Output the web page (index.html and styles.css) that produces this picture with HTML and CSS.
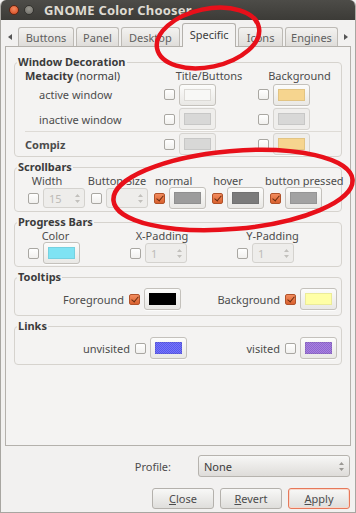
FILE: index.html
```html
<!DOCTYPE html>
<html lang="en">
<head>
    <meta charset="UTF-8">
    <meta name="viewport" content="width=device-width, initial-scale=1.0">
    <title>GNOME Color Chooser</title>
    <link rel="stylesheet" href="styles.css">
</head>
<body>
<div class="window">
    <!-- title bar -->
    <div class="titlebar">
        <span class="wbtn close"></span>
        <span class="wbtn min"></span>
        <span class="title">GNOME Color Chooser</span>
    </div>

    <div class="body">
        <!-- notebook tabs -->
        <div class="tabs">
            <span class="tab-arrow left"></span>
            <div class="tab t-buttons">Buttons</div>
            <div class="tab t-panel">Panel</div>
            <div class="tab t-desktop">Desktop</div>
            <div class="tab t-specific active">Specific</div>
            <div class="tab t-icons">Icons</div>
            <div class="tab t-engines">Engines</div>
            <span class="tab-arrow right"></span>
        </div>

        <div class="notebook">
            <!-- Window Decoration -->
            <fieldset class="group">
                <legend>Window Decoration</legend>
                <div class="deco-grid">
                    <div class="deco-head"><b>Metacity</b> (normal)</div>
                    <div class="col-head head-a">Title/Buttons</div>
                    <div class="col-head head-b">Background</div>

                    <div class="row-label indent">active window</div>
                    <span class="cb g2"></span>
                    <span class="cbtn g3"><i class="sw sw-white"></i></span>
                    <span class="cb g5"></span>
                    <span class="cbtn g6"><i class="sw sw-sand"></i></span>

                    <div class="row-label indent">inactive window</div>
                    <span class="cb g2"></span>
                    <span class="cbtn off g3"><i class="sw sw-grey"></i></span>
                    <span class="cb g5"></span>
                    <span class="cbtn off g6"><i class="sw sw-grey"></i></span>

                    <div class="sep"></div>

                    <div class="row-label"><b>Compiz</b></div>
                    <span class="cb g2"></span>
                    <span class="cbtn off g3"><i class="sw sw-grey"></i></span>
                    <span class="cb g5"></span>
                    <span class="cbtn off g6"><i class="sw sw-sand"></i></span>
                </div>
            </fieldset>

            <!-- Scrollbars -->
            <fieldset class="group">
                <legend>Scrollbars</legend>
                <div class="heads scroll-heads">
                    <span>Width</span>
                    <span>Button Size</span>
                    <span>normal</span>
                    <span>hover</span>
                    <span>button pressed</span>
                </div>
                <div class="controls scroll-controls">
                    <div class="ctl">
                        <span class="cb"></span>
                        <span class="spin"><span class="spin-val">15</span>
                            <svg class="arrows" width="5" height="11" viewBox="0 0 5 11"><path d="M0 4L2.5 1L5 4Z M0 7L2.5 10L5 7Z"/></svg></span>
                    </div>
                    <div class="ctl">
                        <span class="cb"></span>
                        <span class="spin"><span class="spin-val">1</span>
                            <svg class="arrows" width="5" height="11" viewBox="0 0 5 11"><path d="M0 4L2.5 1L5 4Z M0 7L2.5 10L5 7Z"/></svg></span>
                    </div>
                    <div class="ctl">
                        <span class="cb on"></span>
                        <span class="cbtn"><i class="sw sw-normal"></i></span>
                    </div>
                    <div class="ctl">
                        <span class="cb on"></span>
                        <span class="cbtn"><i class="sw sw-hover"></i></span>
                    </div>
                    <div class="ctl">
                        <span class="cb on"></span>
                        <span class="cbtn"><i class="sw sw-pressed"></i></span>
                    </div>
                </div>
            </fieldset>

            <!-- Progress Bars -->
            <fieldset class="group">
                <legend>Progress Bars</legend>
                <div class="heads progress-heads">
                    <span>Color</span>
                    <span>X-Padding</span>
                    <span>Y-Padding</span>
                </div>
                <div class="controls progress-controls">
                    <div class="ctl">
                        <span class="cb"></span>
                        <span class="cbtn"><i class="sw sw-cyan"></i></span>
                    </div>
                    <div class="ctl">
                        <span class="cb"></span>
                        <span class="spin"><span class="spin-val">1</span>
                            <svg class="arrows" width="5" height="11" viewBox="0 0 5 11"><path d="M0 4L2.5 1L5 4Z M0 7L2.5 10L5 7Z"/></svg></span>
                    </div>
                    <div class="ctl">
                        <span class="cb"></span>
                        <span class="spin"><span class="spin-val">1</span>
                            <svg class="arrows" width="5" height="11" viewBox="0 0 5 11"><path d="M0 4L2.5 1L5 4Z M0 7L2.5 10L5 7Z"/></svg></span>
                    </div>
                </div>
            </fieldset>

            <!-- Tooltips -->
            <fieldset class="group">
                <legend>Tooltips</legend>
                <div class="pair-row tooltips-row">
                    <div class="ctl">
                        <span>Foreground</span>
                        <span class="cb on"></span>
                        <span class="cbtn"><i class="sw sw-black"></i></span>
                    </div>
                    <div class="ctl">
                        <span>Background</span>
                        <span class="cb on"></span>
                        <span class="cbtn"><i class="sw sw-yellow"></i></span>
                    </div>
                </div>
            </fieldset>

            <!-- Links -->
            <fieldset class="group">
                <legend>Links</legend>
                <div class="pair-row links-row">
                    <div class="ctl">
                        <span>unvisited</span>
                        <span class="cb"></span>
                        <span class="cbtn"><i class="sw sw-link"></i></span>
                    </div>
                    <div class="ctl">
                        <span>visited</span>
                        <span class="cb"></span>
                        <span class="cbtn"><i class="sw sw-visited"></i></span>
                    </div>
                </div>
            </fieldset>
        </div>

        <!-- profile selector -->
        <div class="profile-row">
            <span>Profile:</span>
            <div class="combo">
                <span>None</span>
                <svg class="arrows" width="5" height="11" viewBox="0 0 5 11"><path d="M0 4L2.5 1L5 4Z M0 7L2.5 10L5 7Z"/></svg>
            </div>
        </div>

        <!-- dialog buttons -->
        <div class="actions">
            <button class="btn"><u>C</u>lose</button>
            <button class="btn"><u>R</u>evert</button>
            <button class="btn default"><u>A</u>pply</button>
        </div>
    </div>

    <!-- red marks drawn over the screenshot -->
    <svg class="marks" width="356" height="513" viewBox="0 0 356 513">
        <ellipse cx="208" cy="38" rx="52" ry="29" transform="rotate(-12 208 38)"/>
        <ellipse cx="233" cy="190" rx="120" ry="39" transform="rotate(-5 233 190)"/>
    </svg>
</div>
</body>
</html>
```

FILE: styles.css
```css
/* reset */
* {
    margin: 0;
    padding: 0;
    box-sizing: border-box;
}

body {
    font-family: "Noto Sans", "DejaVu Sans", sans-serif;
    font-size: 11px;
    color: #4c4c4c;
    background-color: #f2f1f0;
}

/* window frame */
.window {
    position: relative;
    width: 356px;
    height: 513px;
    background-color: #f2f1f0;
    border: 1px solid #a8a6a1;
    border-top: none;
    border-radius: 6px 6px 0 0;
    overflow: hidden;
    display: flex;
    flex-direction: column;
}

.titlebar {
    height: 20px;
    flex: none;
    display: flex;
    align-items: center;
    padding-left: 8px;
    background: linear-gradient(#4d4c48, #3c3b37);
}

.wbtn {
    width: 10px;
    height: 10px;
    border-radius: 50%;
    margin-right: 5px;
}

.wbtn.close {
    background: radial-gradient(circle at 50% 35%, #f58a60, #d2471f);
    border: 1px solid #5e2513;
}

.wbtn.min {
    background: radial-gradient(circle at 50% 35%, #99978f, #6c6b66);
    border: 1px solid #34332f;
}

.title {
    margin-left: 5px;
    color: #dfdbd2;
    font-weight: bold;
    font-size: 13px;
    letter-spacing: 0.2px;
}

.body {
    flex: 1;
    padding: 0 4px;
    display: flex;
    flex-direction: column;
}

/* tabs */
.tabs {
    height: 26px;
    display: flex;
    align-items: flex-end;
    gap: 2px;
}

.tab-arrow {
    width: 11px;
    height: 19px;
    display: flex;
    align-items: center;
    justify-content: center;
}

.tab-arrow::before {
    content: "";
    border-top: 3px solid transparent;
    border-bottom: 3px solid transparent;
}

.tab-arrow.left::before {
    border-right: 4px solid #555;
}

.tab-arrow.right::before {
    border-left: 4px solid #555;
}

.tab {
    height: 19px;
    display: flex;
    align-items: center;
    justify-content: center;
    border: 1px solid #bdbab5;
    border-bottom: none;
    border-radius: 3px 3px 0 0;
    background: linear-gradient(#f3f2f0, #dfddda);
    color: #5f5f5f;
}

.t-buttons { width: 57px; }
.t-panel { width: 43px; }
.t-desktop { width: 60px; }
.t-specific { width: 55px; }
.t-icons { width: 45px; }
.t-engines { width: 54px; }

.tab.active {
    height: 24px;
    margin-bottom: -1px;
    position: relative;
    z-index: 1;
    background: #f4f3f2;
    border-color: #b4b1ac;
    color: #3c3c3c;
    padding-bottom: 2px;
}

.notebook {
    height: 400px;
    flex: none;
    border: 1px solid #b4b1ac;
    background-color: #f4f3f2;
    padding: 8px;
}

/* frames */
.group {
    border: 1px solid #d6d3ce;
    border-radius: 4px;
    margin-bottom: 3px;
    min-width: 0;
}

.group legend {
    margin-left: 2px;
    padding: 0 1px;
    font-weight: bold;
    line-height: 14px;
    color: #3c3c3c;
}

/* window decoration table */
.deco-grid {
    display: grid;
    grid-template-columns: 145px 11px 37px 1fr 11px 37px 27px;
    grid-template-rows: 13px 25px 24px 1px 24px;
    column-gap: 4px;
    align-items: center;
}

.deco-head {
    padding-left: 10px;
    line-height: 13px;
    color: #3c3c3c;
}

.col-head {
    text-align: center;
    line-height: 13px;
}

.head-a { grid-column: 2 / 5; }
.head-b { grid-column: 5 / 8; }

.row-label {
    grid-column: 1;
    padding-left: 10px;
}

.row-label.indent {
    padding-left: 24px;
}

.g2 { grid-column: 2; }
.g3 { grid-column: 3; }
.g5 { grid-column: 5; }
.g6 { grid-column: 6; }

.sep {
    grid-column: 1 / -1;
    height: 1px;
    margin-left: 10px;
    background-color: #dedbd6;
}

/* checkbox */
.cb {
    width: 11px;
    height: 11px;
    flex: none;
    position: relative;
    border: 1px solid #a9a7a2;
    border-radius: 2px;
    background: linear-gradient(#ffffff, #f1f0ee);
}

.cb.on {
    background: linear-gradient(#f28c5e, #d9612f);
    border-color: #b0522a;
}

.cb.on::after {
    content: "";
    position: absolute;
    left: 3px;
    top: 0;
    width: 3px;
    height: 6px;
    border: solid #6a2c10;
    border-width: 0 1.5px 1.5px 0;
    transform: rotate(40deg);
}

/* colour button */
.cbtn {
    width: 37px;
    height: 22px;
    flex: none;
    display: flex;
    align-items: center;
    justify-content: center;
    border: 1px solid #c4c1bc;
    border-radius: 3px;
    background: linear-gradient(#fcfcfb, #e9e8e5);
    box-shadow: 0 1px 0 rgba(255, 255, 255, 0.7);
}

.cbtn.off {
    border-color: #d6d4d0;
    background: #efeeec;
}

.sw {
    width: 27px;
    height: 12px;
    border: 1px solid rgba(0, 0, 0, 0.08);
}

.sw-white { background-color: #f8f8f6; border-color: #dcdad6; }
.sw-sand { background-color: #f6d58f; }
.sw-grey { background-color: #d8d8d7; }
.sw-normal { background-color: #9c9c9c; }
.sw-hover { background-color: #7b7b7b; }
.sw-pressed { background-color: #a2a2a2; }
.sw-cyan { background-color: #7fe3f3; }
.sw-black { background-color: #000; }
.sw-yellow { background-color: #ffffa6; }
.sw-link { background: repeating-conic-gradient(#5454f4 0 25%, #7a7af2 0 50%) 0 0 / 2px 2px; }
.sw-visited { background: repeating-conic-gradient(#8f63d2 0 25%, #a886dc 0 50%) 0 0 / 2px 2px; }

/* disabled spin button */
.spin {
    width: 42px;
    height: 20px;
    flex: none;
    display: flex;
    align-items: center;
    justify-content: space-between;
    padding: 0 4px 0 5px;
    border: 1px solid #d4d2ce;
    border-radius: 3px;
    background-color: #eeedeb;
    color: #bdbbb7;
}

.arrows {
    fill: #9a9894;
}

.spin .arrows {
    fill: #c2c0bc;
}

/* header + control rows */
.heads {
    display: flex;
    line-height: 13px;
}

.heads span {
    text-align: center;
    white-space: nowrap;
}

.scroll-heads span:nth-child(1) { width: 64px; }
.scroll-heads span:nth-child(2) { width: 76px; }
.scroll-heads span:nth-child(3) { width: 36px; }
.scroll-heads span:nth-child(4) { width: 74px; }
.scroll-heads span:nth-child(5) { width: 74px; }

.progress-heads span:nth-child(1) { width: 81px; }
.progress-heads span:nth-child(2) { width: 132px; }
.progress-heads span:nth-child(3) { width: 89px; }

.controls {
    display: flex;
    align-items: center;
    height: 22px;
    padding-left: 13px;
    margin-bottom: 2px;
}

.scroll-controls { gap: 6px; }
.progress-controls { gap: 50px; }

.ctl {
    display: flex;
    align-items: center;
    gap: 4px;
}

/* tooltips / links */
.pair-row {
    display: grid;
    justify-items: end;
    align-items: center;
    padding: 4px 4px 5px 0;
}

.tooltips-row { grid-template-columns: 166px 1fr; }
.links-row { grid-template-columns: 172px 1fr; }

.pair-row .ctl span:first-child {
    margin-right: 1px;
}

/* bottom area */
.profile-row {
    margin-top: 9px;
    margin-right: 1px;
    display: flex;
    justify-content: flex-end;
    align-items: center;
    gap: 27px;
}

.combo {
    width: 152px;
    height: 22px;
    display: flex;
    align-items: center;
    justify-content: space-between;
    padding: 0 5px;
    border: 1px solid #b6b3ae;
    border-radius: 3px;
    background: linear-gradient(#f7f7f6, #dedcd9);
    color: #3c3c3c;
}

.actions {
    margin-top: 11px;
    margin-right: 1px;
    display: flex;
    justify-content: flex-end;
    gap: 6px;
}

.btn {
    width: 62px;
    height: 21px;
    font-family: inherit;
    font-size: 11px;
    color: #4c4c4c;
    border: 1px solid #b4b1ac;
    border-radius: 3px;
    background: linear-gradient(#f8f8f7, #dfdedb);
}

.btn.default {
    border-color: #e7795a;
    box-shadow: inset 0 0 0 1px #f7d8cc;
}

/* red annotation */
.marks {
    position: absolute;
    top: 0;
    left: -1px;
    pointer-events: none;
}

.marks ellipse {
    fill: none;
    stroke: #e8101a;
    stroke-width: 4.5;
}
```
